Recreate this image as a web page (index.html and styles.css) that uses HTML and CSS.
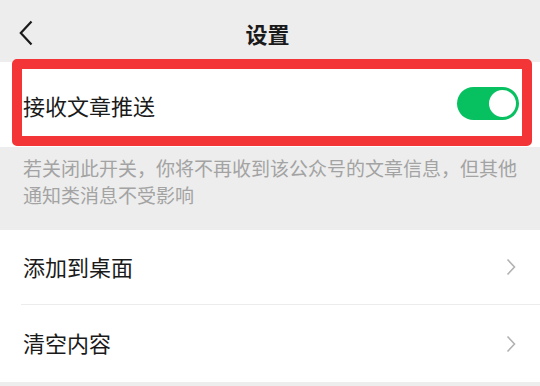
FILE: index.html
```html
<!DOCTYPE html>
<html lang="zh-CN">
<head>
<meta charset="utf-8">
<title>设置</title>
<link rel="stylesheet" href="styles.css">
</head>
<body>
<div class="page">
  <header class="navbar">
    <svg class="back" width="14" height="26" viewBox="0 0 14 26"><path d="M12.5 1.5 L1.8 13 L12.5 24.5" fill="none" stroke="#1a1a1a" stroke-width="2.2"/></svg>
    <h1 class="title">设置</h1>
  </header>
  <section class="row switch-row">
    <span class="label">接收文章推送</span>
    <span class="toggle"><span class="knob"></span></span>
    <div class="highlight"></div>
  </section>
  <p class="desc">若关闭此开关，你将不再收到该公众号的文章信息，但其他通知类消息不受影响</p>
  <section class="group">
    <div class="row link-row first">
      <span class="label">添加到桌面</span>
      <svg class="arrow" width="10" height="18" viewBox="0 0 10 18"><path d="M1.5 1.5 L8.5 9 L1.5 16.5" fill="none" stroke="#b2b2b2" stroke-width="1.6"/></svg>
    </div>
    <div class="divider"></div>
    <div class="row link-row second">
      <span class="label">清空内容</span>
      <svg class="arrow" width="10" height="18" viewBox="0 0 10 18"><path d="M1.5 1.5 L8.5 9 L1.5 16.5" fill="none" stroke="#b2b2b2" stroke-width="1.6"/></svg>
    </div>
  </section>
</div>
</body>
</html>
```
FILE: styles.css
```css
* { box-sizing: border-box; }
html, body {
  margin: 0;
  padding: 0;
  background: #ededed;
  font-family: "Noto Sans CJK SC", "Noto Sans", sans-serif;
  color: #1a1a1a;
}
.page {
  width: 540px;
  height: 386px;
  overflow: hidden;
  background: #ededed;
}
.navbar {
  position: relative;
  height: 62px;
  display: flex;
  align-items: center;
  justify-content: center;
  padding-right: 5px;
}
.back {
  position: absolute;
  left: 19px;
  top: 20px;
}
.title {
  margin: 0;
  font-size: 22px;
  font-weight: 600;
  line-height: 1;
  margin-top: 3px;
}
.row {
  position: relative;
  display: flex;
  align-items: center;
  justify-content: space-between;
  background: #fff;
  padding: 0 21px 0 23px;
}
.label {
  font-size: 22px;
  line-height: 1;
}
.switch-row {
  height: 85px;
}
.toggle {
  position: relative;
  width: 62px;
  height: 33px;
  border-radius: 17px;
  background: #07c160;
  margin-top: -2px;
}
.knob {
  position: absolute;
  right: 3px;
  top: 3px;
  width: 27px;
  height: 27px;
  border-radius: 50%;
  background: #fff;
}
.highlight {
  position: absolute;
  left: 12px;
  right: 8px;
  top: -3px;
  bottom: 1px;
  border: 10px solid #f43537;
  border-radius: 5px;
  pointer-events: none;
}
.desc {
  margin: 0;
  padding: 7px 17px 22px 23px;
  font-size: 19px;
  line-height: 27px;
  color: #a3a3a3;
}
.group {
  background: #fff;
}
.link-row.first { height: 74px; }
.link-row.first .label { margin-top: -3px; }
.link-row.second { height: 77px; }
.link-row.second .label { margin-top: -3px; }
.link-row .arrow { margin-right: 3px; }
.divider {
  height: 1px;
  margin-left: 21px;
  background: #ececec;
}
```
